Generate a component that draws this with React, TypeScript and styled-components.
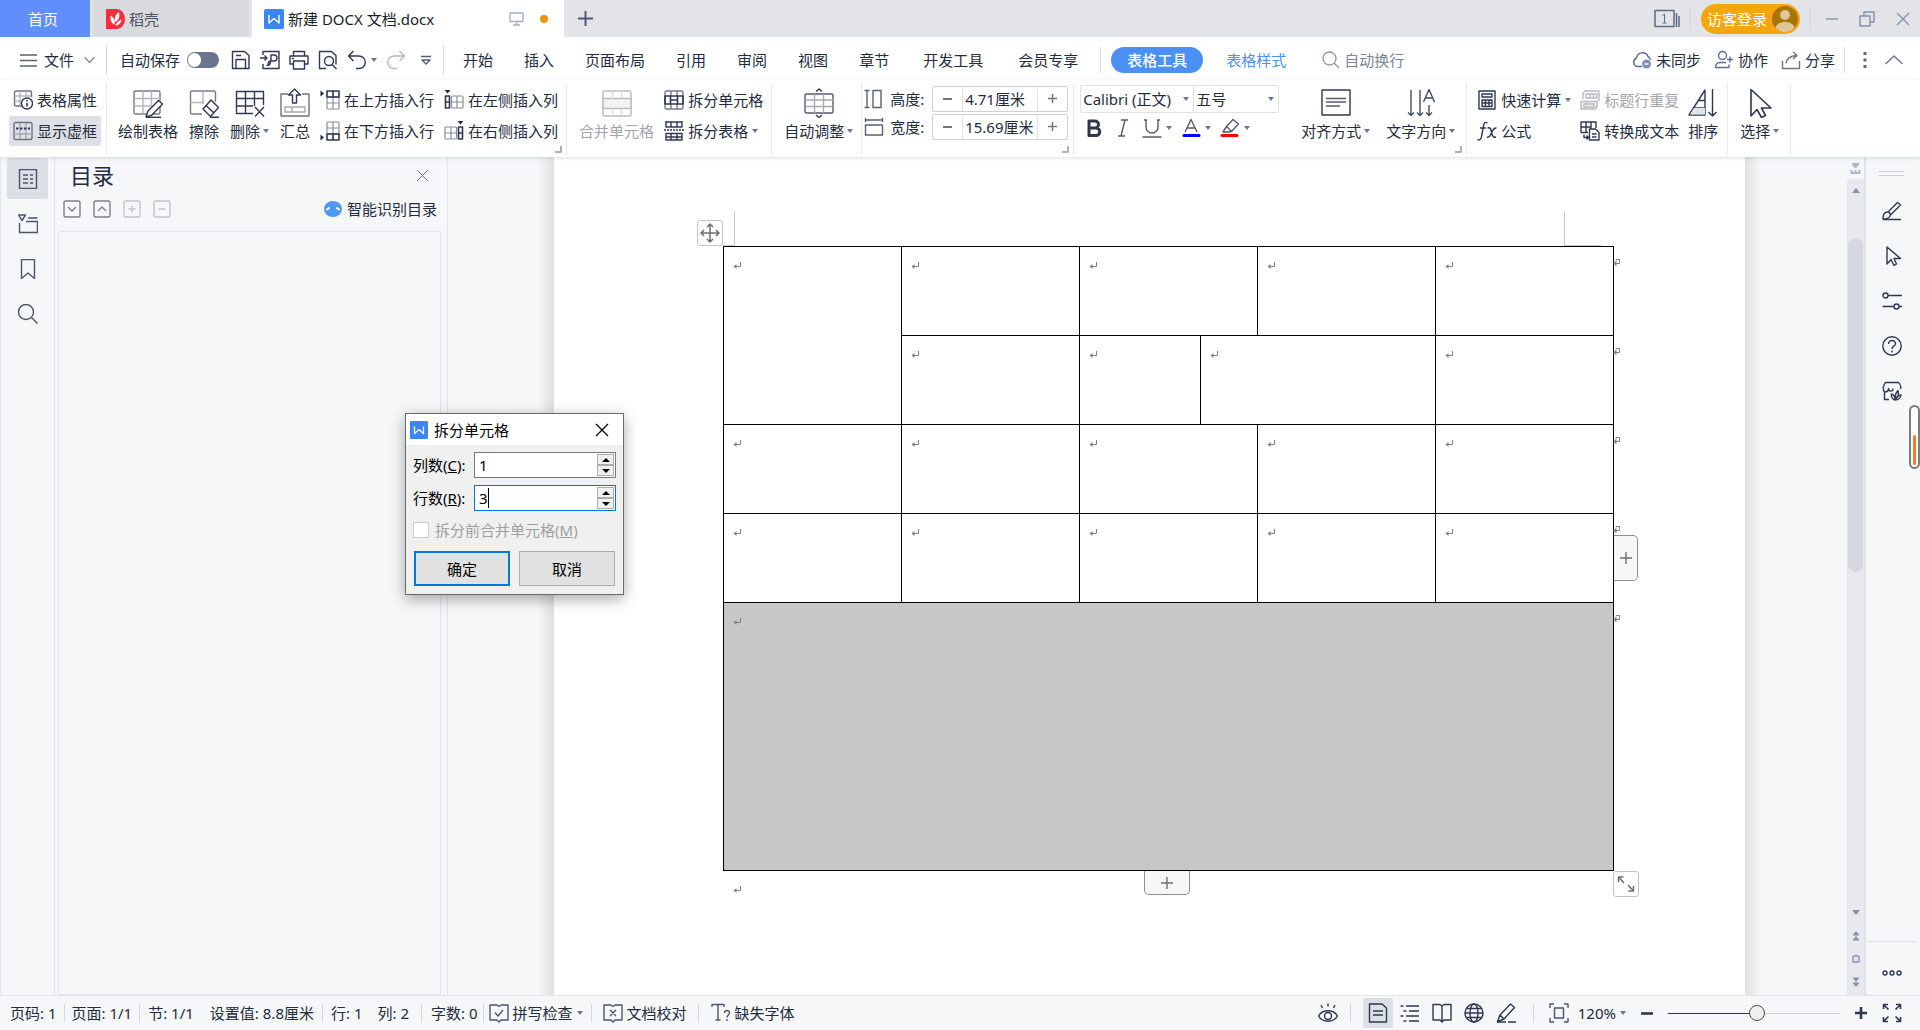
import React from "react";
import styled, { createGlobalStyle, css } from "styled-components";

const INK = "#242b3d";
const LINE = "#2f3850";
const MUTED = "#6b7590";
const PALE = "#b9bbbf";

const Global = createGlobalStyle`
  *, *::before, *::after { box-sizing: border-box; }
  body {
    margin: 0;
    font-family: "Noto Sans", "Noto Sans CJK SC", sans-serif;
    font-size: 15px;
    line-height: 20px;
    color: ${INK};
  }
  button, input, select {
    font: inherit;
    color: inherit;
    margin: 0;
    padding: 0;
    border: 0;
    background: none;
  }
  button { display: flex; align-items: center; white-space: nowrap; cursor: pointer; }
`;

/* ---------- drawing helpers ---------- */

const Svg = styled.svg`
  display: block;
  flex: none;
  fill: none;
  stroke-linejoin: round;
`;

type IconProps = { w?: number; h?: number; c?: string; sw?: number; children?: React.ReactNode };

const Icon = ({ w = 20, h = 20, c = LINE, sw = 1.4, children }: IconProps) => (
  <Svg width={w} height={h} viewBox={`0 0 ${w} ${h}`} stroke={c} strokeWidth={sw} aria-hidden="true">
    {children}
  </Svg>
);

const Caret = () => (
  <Icon w={6} h={4}>
    <path d="M0 0h6L3 4z" fill={MUTED} stroke="none" />
  </Icon>
);

const Plus = ({ size = 12, c = LINE, sw = 2 }: { size?: number; c?: string; sw?: number }) => (
  <Icon w={size} h={size} c={c} sw={sw}>
    <path d={`M${size / 2} 0v${size}M0 ${size / 2}h${size}`} />
  </Icon>
);

const ParaMark = () => (
  <Icon w={8} h={8} c="#808080" sw={1}>
    <path d="M7.5 0V4.500H2" />
    <path d="M0.500 4.500 3.500 2v5z" fill="#808080" stroke="none" />
  </Icon>
);

const RowEndMark = () => (
  <Icon w={7} h={8} c="#808080" sw={1}>
    <path d="M3 1.500V0.500H6.500V4.500H2M3 2v5" />
    <path d="M0 4.500 3 2.500v4z" fill="#808080" stroke="none" />
  </Icon>
);

const CrossX = ({ size = 14, c = MUTED, sw = 1.2 }: { size?: number; c?: string; sw?: number }) => (
  <Icon w={size} h={size} c={c} sw={sw}>
    <path d={`M1 1 ${size - 1} ${size - 1}M${size - 1} 1 1 ${size - 1}`} />
  </Icon>
);

/* ---------- shell ---------- */

const Shell = styled.div`
  height: 100vh;
  display: grid;
  grid-template-rows: auto auto auto minmax(0, 1fr) auto;
  overflow: hidden;
  background: #f5f7f9;
`;

/* ---------- title bar ---------- */

const TitleBar = styled.header`
  display: flex;
  height: 37px;
  background: #e2e4e8;
`;

const HomeTab = styled.button`
  width: 90px;
  justify-content: center;
  padding-right: 4px;
  color: #fff;
  background: #608efa;
`;

const DocTab = styled.button<{ $active?: boolean; $w: number }>`
  width: ${(p) => p.$w}px;
  margin-left: 3px;
  padding: 0 16px 0 ${(p) => (p.$active ? 12 : 13)}px;
  gap: 4px;
  color: ${(p) => (p.$active ? "#1a1e28" : "#4b5364")};
  background: ${(p) => (p.$active ? "#fff" : "#d9dadd")};
`;

const TabFlags = styled.span`
  display: flex;
  align-items: center;
  gap: 16px;
  margin-left: auto;
`;

const Dot = styled.span`
  width: 8px;
  height: 8px;
  border-radius: 50%;
  background: #e8960c;
`;

const NewTab = styled.button`
  padding: 0 14px;
`;

const WindowTools = styled.div`
  display: flex;
  align-items: center;
  gap: 10px;
  margin-left: auto;
  padding-right: 10px;
`;

const WindowButtons = styled.div`
  display: flex;
  align-items: center;
  gap: 21px;
  padding-left: 5px;
`;

const Rule = styled.span<{ $h: number }>`
  flex: none;
  width: 1px;
  height: ${(p) => p.$h}px;
  background: #d5d7dc;
`;

const Login = styled.button`
  height: 30px;
  padding: 0 2px 0 6px;
  gap: 5px;
  border-radius: 15px;
  color: #fff;
  background: #f5a60d;
`;

/* ---------- menu row ---------- */

const MenuBar = styled.nav`
  display: flex;
  align-items: center;
  height: 43px;
  padding-top: 3px;
  background: #fff;
`;

const FileButton = styled.button`
  padding: 0 11px 0 20px;
  gap: 7px;
  svg:last-child { margin-left: 3px; }
`;

const QuickBar = styled.div`
  display: flex;
  align-items: center;
  gap: 9px;
  padding: 0 12px 0 13px;
`;

const AutoSave = styled.label`
  display: flex;
  align-items: center;
  gap: 7px;
  padding-right: 3px;
`;

const Toggle = styled.input`
  appearance: none;
  width: 32px;
  height: 16px;
  border-radius: 8px;
  background: ${MUTED};
  &::before {
    content: "";
    display: block;
    width: 13px;
    height: 14px;
    margin: 1px;
    border-radius: 7px;
    background: #fff;
  }
`;

const CaretButton = styled.button`
  gap: 4px;
`;

const MoreQuick = styled.button`
  padding-left: 6px;
`;

const TabList = styled.div<{ $gap: number }>`
  display: flex;
  gap: ${(p) => p.$gap}px;
  padding-left: 4px;
`;

const MenuTab = styled.button`
  padding: 0 15px;
`;

const ContextTabs = styled.div`
  display: flex;
  align-items: center;
  gap: 23px;
  margin: 0 36px 0 7px;
  padding-left: 10px;
  border-left: 1px solid #d5d7dc;
`;

const ActivePill = styled.button`
  height: 26px;
  padding: 0 16px;
  border-radius: 13px;
  font-weight: 500;
  color: #fff;
  background: #4a90f5;
`;

const StyleTab = styled.button`
  color: #4a90f5;
`;

const SearchBox = styled.label`
  display: flex;
  align-items: center;
  gap: 4px;
`;

const SearchInput = styled.input`
  width: 90px;
  outline: 0;
  &::placeholder { color: #7b8496; opacity: 1; }
`;

const MenuRight = styled.div`
  display: flex;
  align-items: center;
  gap: 9px;
  margin-left: auto;
  padding-right: 17px;
`;

const ShareTools = styled.div`
  display: flex;
  align-items: center;
  gap: 13px;
`;

const MenuEnd = styled.div`
  display: flex;
  align-items: center;
  gap: 18px;
`;

/* ---------- ribbon ---------- */

const Ribbon = styled.div`
  position: relative;
  z-index: 2;
  display: flex;
  height: 77px;
  background: #fff;
  box-shadow: 0 1px 4px rgba(40, 50, 70, 0.16);
`;

const Group = styled.section<{ $pad: string; $gap?: number }>`
  position: relative;
  display: flex;
  gap: ${(p) => p.$gap ?? 10}px;
  padding: ${(p) => p.$pad};
  &::after {
    content: "";
    position: absolute;
    right: 0;
    top: 3px;
    width: 1px;
    height: 72px;
    background: #e9eaed;
  }
`;

const BigRow = styled.div<{ $gap: number }>`
  display: flex;
  gap: ${(p) => p.$gap}px;
`;

const BigBtn = styled.button`
  flex-direction: column;
  align-items: center;
  gap: 3px;
  height: 62px;
  padding-top: 8px;
  justify-content: flex-start;
  &:disabled { color: #a3a5aa; }
`;

const BigLabel = styled.span`
  display: flex;
  align-items: center;
  gap: 3px;
`;

const Stack = styled.div`
  display: flex;
  flex-direction: column;
  gap: 1px;
  padding-top: 5px;
`;

const SmallBtn = styled.button<{ $on?: boolean; $pad?: boolean }>`
  height: 30px;
  gap: 4px;
  border-radius: 2px;
  &:disabled { color: #a3a5aa; }
  ${(p) => p.$pad && css`padding: 0 4px;`}
  ${(p) => p.$on && css`background: #dde1e6;`}
`;

const Launcher = styled.button`
  position: absolute;
  right: 5px;
  bottom: 4px;
`;

const SizeStack = styled.div`
  display: flex;
  flex-direction: column;
  gap: 1px;
  padding-top: 5px;
`;

const SizeRow = styled.div`
  display: flex;
  align-items: center;
  height: 27px;
`;

const SizeLabel = styled.label`
  display: flex;
  align-items: center;
  gap: 6px;
  width: 68px;
`;

const Stepper = styled.div`
  display: flex;
  height: 26px;
  border: 1px solid #cdd0d6;
  border-radius: 2px;
`;

const StepBtn = styled.button`
  width: 29px;
  justify-content: center;
`;

const SizeInput = styled.input`
  width: 76px;
  padding: 0 2px;
  border: solid #dfe1e5;
  border-width: 0 1px;
`;

const FontStack = styled.div`
  display: flex;
  flex-direction: column;
  gap: 5px;
  padding: 5px 12px 0 0;
`;

const FontRow = styled.div`
  display: flex;
  height: 28px;
  border: 1px solid #dfe1e5;
  border-radius: 2px;
`;

const SelectWrap = styled.label<{ $w: number; $line?: boolean }>`
  display: flex;
  align-items: center;
  width: ${(p) => p.$w}px;
  padding: 0 4px 0 2px;
  ${(p) => p.$line && css`border-left: 1px solid #dfe1e5;`}
`;

const PlainSelect = styled.select`
  flex: 1;
  min-width: 0;
  appearance: none;
  outline: 0;
`;

const FormatRow = styled.div`
  display: flex;
  gap: 9px;
  padding-left: 4px;
`;

/* ---------- body ---------- */

const Body = styled.main`
  position: relative;
  display: flex;
  min-height: 0;
`;

const LeftRail = styled.div`
  display: flex;
  flex-direction: column;
  gap: 4px;
  width: 55px;
  padding: 1px 0 0 6px;
  border: solid #e4e6ec;
  border-width: 0 1px;
`;

const RailBtn = styled.button<{ $on?: boolean }>`
  justify-content: center;
  width: 41px;
  height: 41px;
  border-radius: 2px;
  ${(p) => p.$on && css`background: #dbdfe6;`}
`;

const Panel = styled.aside`
  display: flex;
  flex-direction: column;
  width: 393px;
  padding: 8px 6px 0 3px;
  border-right: 1px solid #e2e4ea;
`;

const PanelHead = styled.div`
  display: flex;
  justify-content: space-between;
  padding: 0 12px;
`;

const PanelTitle = styled.h2`
  margin: 0;
  font-size: 22px;
  line-height: 20px;
  font-weight: 400;
`;

const PanelTools = styled.div`
  display: flex;
  align-items: center;
  gap: 12px;
  padding: 14px 4px 12px 5px;
`;

const SmartBtn = styled.button`
  gap: 5px;
  margin-left: auto;
`;

const Outline = styled.div`
  flex: 1;
  border: 1px solid #e2e4ea;
  border-radius: 2px;
`;

const DocArea = styled.div`
  flex: 1;
  display: flex;
  justify-content: center;
  min-width: 0;
  padding-left: 4px;
  overflow: hidden;
`;

const Page = styled.article`
  position: relative;
  flex: none;
  width: 1191px;
  padding: 89px 0 0 169px;
  background: #fff;
  &::before, &::after {
    content: "";
    position: absolute;
    top: 0;
    bottom: 0;
    width: 16px;
  }
  &::before { right: 100%; background: linear-gradient(to left, #dfe0e2, #f5f7f9); }
  &::after { left: 100%; background: linear-gradient(to right, #dfe0e2, #f5f7f9); }
`;

const TableWrap = styled.div`
  position: relative;
  width: 890px;
`;

const Grid = styled.table`
  width: 891px;
  table-layout: fixed;
  border-collapse: separate;
  border-spacing: 0;
  border: solid #000;
  border-width: 1px 0 0 1px;
`;

const Cell = styled.td<{ $selected?: boolean }>`
  position: relative;
  padding: 15px 9px 0;
  vertical-align: top;
  border: solid #000;
  border-width: 0 1px 1px 0;
  ${(p) => p.$selected && css`background: #c7c7c7;`}
`;

const Row = styled.tr<{ $h: number }>`
  height: ${(p) => p.$h}px;
`;

const RowEnd = styled.span`
  position: absolute;
  top: 12px;
  left: 100%;
`;

const LastPara = styled.p`
  margin: 0;
  padding: 15px 10px;
`;

const Corner = styled.span<{ $side: "left" | "right" }>`
  position: absolute;
  bottom: 100%;
  height: 35px;
  border: solid #c9c9c9;
  ${(p) =>
    p.$side === "left"
      ? css`left: 0; width: 12px; border-width: 0 1px 1px 0;`
      : css`right: 12px; width: 37px; border-width: 0 0 1px 1px;`}
`;

const handle = css`
  position: absolute;
  justify-content: center;
  border: 1px solid #c4c4c4;
  border-radius: 3px;
  background: #fff;
`;

const MoveHandle = styled.button`
  ${handle}
  right: 100%;
  bottom: 100%;
  width: 26px;
  height: 26px;
`;

const ResizeHandle = styled.button`
  ${handle}
  left: 100%;
  top: 100%;
  width: 26px;
  height: 26px;
`;

const AddColumn = styled.button`
  ${handle}
  left: 100%;
  top: 289px;
  width: 25px;
  height: 46px;
  border-color: #8f8f8f;
  border-left: 1px solid #000;
  border-radius: 0 5px 5px 0;
  background: #f7f7f7;
`;

const AddRow = styled.button`
  ${handle}
  left: 50%;
  top: 100%;
  width: 46px;
  height: 24px;
  margin-left: -24px;
  border-color: #8f8f8f;
  border-top: 0;
  border-radius: 0 0 5px 5px;
  background: #f7f7f7;
`;

const ScrollBar = styled.div`
  display: flex;
  flex-direction: column;
  width: 19px;
  padding-bottom: 2px;
  border-right: 2px solid #e0e2ea;
  background: #e8e9ee;
`;

const ScrollBtn = styled.button<{ $light?: boolean }>`
  flex: none;
  justify-content: center;
  height: ${(p) => (p.$light ? 22 : 23)}px;
  ${(p) => p.$light && css`background: #f5f7f9;`}
`;

const Track = styled.div`
  flex: 1;
  display: flex;
  flex-direction: column;
  align-items: center;
  &::before { content: ""; flex: 36; }
  &::after { content: ""; flex: 330; }
`;

const Thumb = styled.div`
  flex: 335;
  width: 15px;
  border-radius: 8px;
  background: #d5d8e1;
`;

const RightRail = styled.div`
  position: relative;
  display: flex;
  flex-direction: column;
  align-items: center;
  width: 54px;
  padding: 14px 3px 0 0;
`;

const Grip = styled.span`
  width: 25px;
  height: 5px;
  margin-bottom: 12px;
  border: solid #cfd1d6;
  border-width: 1px 0;
`;

const SideBtn = styled.button`
  justify-content: center;
  width: 41px;
  height: 45px;
`;

const SideFoot = styled.div`
  display: flex;
  justify-content: center;
  width: 49px;
  height: 54px;
  margin-top: auto;
  padding-top: 8px;
  border-top: 1px solid #dfe1e6;
`;

const Gauge = styled.span`
  position: absolute;
  right: 0;
  top: 248px;
  display: flex;
  align-items: flex-end;
  width: 11px;
  height: 64px;
  padding: 2px;
  border: 2px solid #7d7d7d;
  border-radius: 6px;
  background: #fff;
  &::before {
    content: "";
    flex: 1;
    height: 54%;
    border-radius: 2px;
    background: #fb7a22;
  }
`;

/* ---------- dialog ---------- */

const Dialog = styled.form`
  position: absolute;
  z-index: 3;
  left: 405px;
  top: 256px;
  width: 219px;
  border: 1px solid #6a6a6a;
  color: #000;
  background: #f0f0f0;
  box-shadow: 0 4px 14px rgba(0, 0, 0, 0.34);
`;

const DialogTitle = styled.div`
  display: flex;
  align-items: center;
  gap: 6px;
  height: 31px;
  padding: 0 14px 0 4px;
  background: #fff;
  button { margin-left: auto; }
`;

const DialogBody = styled.div`
  display: flex;
  flex-direction: column;
  gap: 7px;
  padding: 7px 7px 8px;
`;

const Field = styled.div`
  display: grid;
  grid-template-columns: 61px minmax(0, 1fr);
  align-items: center;
`;

const NumBox = styled.div<{ $focus?: boolean }>`
  position: relative;
  display: flex;
  height: 26px;
  padding: 1px;
  border: 1px solid ${(p) => (p.$focus ? "#0078d7" : "#7a7a7a")};
  background: #fff;
`;

const NumInput = styled.input`
  flex: 1;
  min-width: 0;
  padding-left: 3px;
  outline: 0;
  caret-color: transparent;
`;

const Cursor = styled.span`
  position: absolute;
  left: 13px;
  top: 2px;
  width: 1px;
  height: 20px;
  background: #000;
`;

const Spin = styled.div`
  display: flex;
  flex-direction: column;
  width: 17px;
  button {
    flex: 1;
    justify-content: center;
    border: 1px solid #adadad;
    background: #f0f0f0;
  }
`;

const MergeCheck = styled.label`
  display: flex;
  align-items: center;
  gap: 6px;
  height: 24px;
  color: #a0a0a0;
`;

const CheckBox = styled.input`
  appearance: none;
  width: 16px;
  height: 16px;
  border: 1px solid #ccc;
  background: #fff;
`;

const DialogButtons = styled.div`
  display: grid;
  grid-template-columns: 1fr 1fr;
  gap: 9px;
  padding: 2px 1px 0;
`;

const DialogBtn = styled.button<{ $primary?: boolean }>`
  justify-content: center;
  height: 35px;
  border: ${(p) => (p.$primary ? "2px solid #0078d7" : "1px solid #adadad")};
  background: #e1e1e1;
`;

/* ---------- status bar ---------- */

const StatusBar = styled.footer`
  display: flex;
  align-items: center;
  height: 35px;
  padding: 0 18px 0 3px;
  border-top: 1px solid #e2e4e8;
  background: #f5f7f9;
`;

const StatusItem = styled.button<{ $pad?: string }>`
  gap: 4px;
  padding: ${(p) => p.$pad ?? "0 8px"};
`;

const StatusRight = styled.div`
  display: flex;
  align-items: center;
  gap: 12px;
  margin-left: auto;
`;

const ViewButtons = styled.div`
  display: flex;
  gap: 2px;
`;

const ViewBtn = styled.button<{ $on?: boolean }>`
  justify-content: center;
  width: 30px;
  height: 30px;
  border-radius: 2px;
  ${(p) => p.$on && css`background: #dbdfe6;`}
`;

const ZoomTools = styled.div`
  display: flex;
  align-items: center;
  gap: 15px;
  padding-left: 3px;
`;

const ZoomFit = styled.div`
  display: flex;
  gap: 9px;
`;

const ZoomSlider = styled.input`
  appearance: none;
  width: 172px;
  height: 16px;
  &::-webkit-slider-runnable-track {
    height: 16px;
    background:
      linear-gradient(to right, ${LINE} 52%, #d3d5da 52%) center / 100% 1px no-repeat;
  }
  &::-webkit-slider-thumb {
    appearance: none;
    width: 16px;
    height: 16px;
    border: 1px solid #4b4b4b;
    border-radius: 50%;
    background: #efefef;
  }
`;

/* ---------- table icons ---------- */

const WLogo = ({ size = 20 }: { size?: number }) => (
  <Svg width={size} height={size} viewBox="0 0 20 20" aria-hidden="true">
    <rect width="20" height="20" rx="1.500" fill="#3b86f3" />
    <path d="M5 6v8l5-4.500 5 4.500v-8" stroke="#fff" strokeWidth="1.400" />
  </Svg>
);

const InsertRowIcon = ({ down }: { down?: boolean }) => (
  <Icon w={20} h={20} sw={1.2}>
    <g transform={down ? "translate(0 20) scale(1 -1)" : undefined}>
      <path d="M0.500 0.500v6l3.500-3z" fill={INK} stroke="none" />
      <rect x="7" y="7" width="12" height="12" rx="1" stroke="#8a8e99" />
      <path d="M13 7v12M7 13h12" stroke="#8a8e99" />
      <path d="M7 1h12v6H7zM13 1v6" strokeWidth="1.600" />
    </g>
  </Icon>
);

const InsertColIcon = ({ right }: { right?: boolean }) => (
  <Icon w={20} h={20} sw={1.2}>
    <g transform={right ? "translate(20 0) scale(-1 1)" : undefined}>
      <path d="M0.500 0h6L3.500 3.500z" fill={INK} stroke="none" />
      <rect x="7.500" y="6" width="11.500" height="12" rx="1" stroke="#8a8e99" />
      <path d="M13 6v12M7 12h12" stroke="#8a8e99" />
      <path d="M1.500 6h4v12h-4zM1.500 12h4" strokeWidth="1.600" />
    </g>
  </Icon>
);

const GridLarge = () => (
  <>
    <rect x="1" y="3" width="26" height="23" rx="1.500" stroke="#777c88" />
    <path d="M10 3v23M18.500 3v23M1 10.500h26M1 18h26" stroke="#b3b6bd" />
  </>
);

const columns = [178, 178, 121, 57, 178, 178];

export default function App() {
  return (
    <Shell>
      <Global />
      <TitleBar>
        <HomeTab>首页</HomeTab>
        <DocTab $w={156}>
          <Icon w={19} h={20}>
            <path d="M0 0h11a8 10 0 0 1 0 20H0z" fill="#fb2d3c" stroke="none" />
            <path d="M8.500 16C4 13 4 9 5 6.500 8 9 9.500 12 8.500 16zM9 13C8 8 10 5 13 3c1 5 0 8-4 10zM9.500 16.500c1-3 3-5 6-6-.500 3.500-2.500 6-6 6z" fill="#fff" stroke="none" />
          </Icon>
          稻壳
        </DocTab>
        <DocTab $w={312} $active>
          <WLogo />
          新建 DOCX 文档.docx
          <TabFlags>
            <Icon w={15} h={14} c="#a3adc3" sw={1.3}>
              <path d="M1 1h13v8.500H1zM7.500 9.500V13M4 13h7" />
            </Icon>
            <Dot />
          </TabFlags>
        </DocTab>
        <NewTab aria-label="新建标签">
          <Plus size={15} c="#4c5876" />
        </NewTab>
        <WindowTools>
          <Icon w={26} h={20} c="#5d6a88" sw={1.5}>
            <path d="M1 1.500h19v16H1zM22.500 4v14M25 7v11" />
            <path d="M8.500 6.500 10.500 5v9M8.500 14h4" strokeWidth="1" />
          </Icon>
          <Rule $h={25} />
          <Login>
            访客登录
            <Icon w={26} h={26}>
              <circle cx="13" cy="13" r="13" fill="#a97407" stroke="none" />
              <circle cx="13" cy="9" r="5" fill="#ddc698" stroke="none" />
              <path d="M3.500 22c1-8 18-8 19 0a13 13 0 0 1-19 0z" fill="#ddc698" stroke="none" />
            </Icon>
          </Login>
          <Rule $h={25} />
          <WindowButtons>
            <button aria-label="最小化">
              <Icon w={12} h={2} c="#8290ac"><path d="M0 1h12" /></Icon>
            </button>
            <button aria-label="还原">
              <Icon w={16} h={16} c="#8290ac">
                <path d="M1 5h10v10H1zM5 5V1h10v10h-4" />
              </Icon>
            </button>
            <button aria-label="关闭">
              <CrossX c="#8290ac" />
            </button>
          </WindowButtons>
        </WindowTools>
      </TitleBar>

      <MenuBar>
        <FileButton>
          <Icon w={17} h={13} c="#5b6270"><path d="M0 1h17M0 6.500h17M0 12h17" /></Icon>
          文件
          <Icon w={11} h={8} c="#8a8f9a"><path d="M0.500 1 5.500 6.500 10.500 1" /></Icon>
        </FileButton>
        <Rule $h={30} />
        <QuickBar>
          <AutoSave>
            自动保存
            <Toggle type="checkbox" role="switch" />
          </AutoSave>
          <button aria-label="保存">
            <Icon>
              <path d="M1.500 1.500h12l4.500 4V18.500H1.500zM5 18V9.500h9.500V18M5 5.500h5" />
            </Icon>
          </button>
          <button aria-label="输出">
            <Icon>
              <path d="M3 5V1.500h16v17H3V14M0 8h7M4.500 5.500 7 8 4.500 10.500" />
              <path d="M8 15c0-3 1-4 3-4h3a3 3 0 0 0 0-6h-3v6M6.500 15.500c2 0 4-1 4-4" />
            </Icon>
          </button>
          <button aria-label="打印">
            <Icon>
              <path d="M4.500 6V1.500h11V6M4.500 14H1V6h18v8h-3.500M4.500 11h11v8h-11zM3 8.500h2" />
            </Icon>
          </button>
          <button aria-label="打印预览">
            <Icon>
              <path d="M8 18.500H1.500v-17h12l4.500 4v9" />
              <circle cx="11" cy="11" r="4.500" />
              <path d="M14 14.500 18.500 19" />
            </Icon>
          </button>
          <CaretButton aria-label="撤销">
            <Icon>
              <path d="M6.500 1 1.500 6l5 5M1.500 6H12a6 6 0 0 1 0 12.500H9" />
            </Icon>
            <Caret />
          </CaretButton>
          <button aria-label="恢复">
            <Icon c="#b4b7bd">
              <path d="M13.500 1l5 5-5 5M18.500 6H8a6 6 0 0 0 0 12.500h3" />
            </Icon>
          </button>
          <MoreQuick aria-label="更多">
            <Icon w={10} h={11} c="#555c6c"><path d="M0 1.500h10M1 5h8L5 9z" /></Icon>
          </MoreQuick>
        </QuickBar>
        <Rule $h={30} />
        <TabList $gap={1}>
          {["开始", "插入", "页面布局", "引用", "审阅", "视图", "章节"].map((t) => (
            <MenuTab key={t}>{t}</MenuTab>
          ))}
        </TabList>
        <TabList $gap={5}>
          {["开发工具", "会员专享"].map((t) => (
            <MenuTab key={t}>{t}</MenuTab>
          ))}
        </TabList>
        <ContextTabs>
          <ActivePill>表格工具</ActivePill>
          <StyleTab>表格样式</StyleTab>
        </ContextTabs>
        <SearchBox>
          <Icon w={18} h={18} c="#8e97ab" sw={1.3}>
            <circle cx="7.500" cy="7.500" r="6.500" />
            <path d="M12 12l5 5" />
          </Icon>
          <SearchInput type="text" placeholder="自动换行" />
        </SearchBox>
        <MenuRight>
          <ShareTools>
            <CaretButton>
              <Icon c="#5f6d8c">
                <path d="M10 16.500H5A4.500 4.500 0 0 1 4.500 8a6 6 0 0 1 11.500-1.500A4.500 4.500 0 0 1 18.500 10" />
                <circle cx="14.500" cy="14" r="4.500" fill="#8391b3" stroke="none" />
                <path d="M12.500 14h4" stroke="#fff" />
              </Icon>
              未同步
            </CaretButton>
            <CaretButton>
              <Icon c="#5f6d8c">
                <circle cx="8.500" cy="5.500" r="4" />
                <path d="M12 12.500H6a4.500 4.500 0 0 0-4.500 5H15v-3M13 9.500h6M16 6.500v6" />
              </Icon>
              协作
            </CaretButton>
            <CaretButton>
              <Icon c="#6d7484">
                <path d="M1.500 11v7.500h17V11M5 13.500C5.500 9 8 6 15.500 5.500M12 2l4 3.500L12 9" />
              </Icon>
              分享
            </CaretButton>
          </ShareTools>
          <MenuEnd>
            <Rule $h={26} />
            <button aria-label="更多选项">
              <Icon w={4} h={16}>
                <path d="M2 0v3M2 6.500v3M2 13v3" strokeWidth="3" stroke="#5f6675" />
              </Icon>
            </button>
            <button aria-label="折叠功能区">
              <Icon w={18} h={10} c="#6d7484"><path d="M0.500 9 9 1l8.500 8" /></Icon>
            </button>
          </MenuEnd>
        </MenuRight>
      </MenuBar>

      <Ribbon>
        <Group $pad="0 6px 0 9px">
          <Stack>
            <SmallBtn $pad>
              <Icon>
                <path d="M9 16H3a1.500 1.500 0 0 1-1.500-1.500v-12A1.500 1.500 0 0 1 3 1h14a1.500 1.500 0 0 1 1.500 1.500V7" stroke="#6d727e" />
                <path d="M7 1v15M13 1v5M1.500 6H18M1.500 11H8" stroke="#b3b6bd" />
                <circle cx="14" cy="13.500" r="5.500" />
                <path d="M14 13v3.500M14 10v1.500" strokeWidth="1.600" />
              </Icon>
              表格属性
            </SmallBtn>
            <SmallBtn $pad $on>
              <Icon>
                <rect x="1" y="1.500" width="18" height="17" rx="1.500" stroke="#6d727e" />
                <path d="M7 2v16M13 2v16M1 13h18" stroke="#a5a9b1" />
                <path d="M3 7.500h14" strokeDasharray="2.500 1.500" strokeWidth="1.800" />
              </Icon>
              显示虚框
            </SmallBtn>
          </Stack>
        </Group>

        <Group $pad="0 9px 0 11px">
          <BigRow $gap={11}>
            <BigBtn>
              <Icon w={30} h={30}>
                <GridLarge />
                <path d="M13 29l2-6L25.500 12.500l4 3.500L19 27z" fill="#fff" />
                <path d="M13 29.300h15" />
              </Icon>
              <BigLabel>绘制表格</BigLabel>
            </BigBtn>
            <BigBtn>
              <Icon w={30} h={30}>
                <path d="M13 26H3a1.500 1.500 0 0 1-1.500-1.500v-20A1.500 1.500 0 0 1 3 3h22a1.500 1.500 0 0 1 1.500 1.500V14" stroke="#777c88" />
                <path d="M14 3v13M1.500 14.500H15" stroke="#b3b6bd" />
                <path d="M22 12 29.500 19.500 21.500 28.500 14 21z" fill="#fff" />
                <path d="M17 17.500l8 7.500M21 29.300h9" />
              </Icon>
              <BigLabel>擦除</BigLabel>
            </BigBtn>
            <BigBtn>
              <Icon w={30} h={30}>
                <path d="M18 25.500H1.500v-22h27V17M10.500 3.500v22M19.500 3.500V18M1.500 10.500h27M1.500 18H18" />
                <path d="M20 19l9 9.500M29 19l-9 9.500" />
              </Icon>
              <BigLabel>删除<Caret /></BigLabel>
            </BigBtn>
            <BigBtn>
              <Icon w={30} h={30}>
                <path d="M8 6H1v22h28V6h-7" stroke="#6d727e" />
                <path d="M5 19h20v5H5zM12 19v5" stroke="#a5a9b1" />
                <path d="M12.500 15V7h-4l6-6 6 6h-4v8z" />
              </Icon>
              <BigLabel>汇总</BigLabel>
            </BigBtn>
          </BigRow>
          <Stack>
            <SmallBtn><InsertRowIcon />在上方插入行</SmallBtn>
            <SmallBtn><InsertRowIcon down />在下方插入行</SmallBtn>
          </Stack>
          <Stack>
            <SmallBtn><InsertColIcon />在左侧插入列</SmallBtn>
            <SmallBtn><InsertColIcon right />在右侧插入列</SmallBtn>
          </Stack>
          <Launcher aria-label="行和列选项">
            <Icon w={7} h={7} c="#a7b0c4" sw={2}><path d="M6 0v6H0" /></Icon>
          </Launcher>
        </Group>

        <Group $pad="0 9px 0 12px">
          <BigBtn disabled>
            <Icon w={30} h={30} c={PALE}>
              <rect x="1" y="3" width="28" height="25" rx="1.500" />
              <path d="M1 10.500h28v10H1z" fill="#f3f3f4" />
              <path d="M10.500 3v7.500M19.500 3v7.500M10.500 20.500V28M19.500 20.500V28" stroke="#dcdde0" />
            </Icon>
            <BigLabel>合并单元格</BigLabel>
          </BigBtn>
          <Stack>
            <SmallBtn>
              <Icon>
                <rect x="1" y="1" width="18" height="18" rx="1.500" stroke="#777c88" />
                <path d="M7 1v5M13 1v5M7 14v5M13 14v5" stroke="#777c88" />
                <path d="M1 6h18v8H1zM6.500 6v8M13.500 6v8M6.500 10h7" strokeWidth="1.600" />
              </Icon>
              拆分单元格
            </SmallBtn>
            <SmallBtn>
              <Icon>
                <path d="M2 0v6h16V0M2 1h16M7 1v5M13 1v5" />
                <path d="M0 9h20" strokeDasharray="2 1" />
                <path d="M2 12.500h16v6.500H2zM7 12.500V19M13 12.500V19M2 16h16" />
              </Icon>
              拆分表格<Caret />
            </SmallBtn>
          </Stack>
        </Group>

        <Group $pad="0 9px 0 12px">
          <BigBtn>
            <Icon w={30} h={30}>
              <rect x="1" y="6" width="28" height="19" rx="1.500" stroke="#555b6b" />
              <path d="M10.500 6v19M19.500 6v19M1 12h28M1 18.500h28" stroke="#a5a9b1" />
              <path d="M12 3.500 15 1l3 2.500M12 27l3 2.500 3-2.500" />
            </Icon>
            <BigLabel>自动调整<Caret /></BigLabel>
          </BigBtn>
        </Group>

        <Group $pad="0 6px 0 2px">
          <SizeStack>
            <SizeRow>
              <SizeLabel htmlFor="row-height">
                <Icon c="#5a6170"><path d="M0.500 1.500h5M3 1.500v17M0.500 18.500h5M9 1.500h8v17H9z" /></Icon>
                高度:
              </SizeLabel>
              <Stepper>
                <StepBtn aria-label="减小高度"><Icon w={9} h={2} c="#70757f" sw={2}><path d="M0 1h9" /></Icon></StepBtn>
                <SizeInput id="row-height" type="text" defaultValue="4.71厘米" />
                <StepBtn aria-label="增大高度"><Plus size={9} c="#70757f" sw={1.5} /></StepBtn>
              </Stepper>
            </SizeRow>
            <SizeRow>
              <SizeLabel htmlFor="col-width">
                <Icon c="#5a6170"><path d="M1.500 1v4M1.500 3h17M18.500 1v4M1.500 8h17v10h-17z" /></Icon>
                宽度:
              </SizeLabel>
              <Stepper>
                <StepBtn aria-label="减小宽度"><Icon w={9} h={2} c="#70757f" sw={2}><path d="M0 1h9" /></Icon></StepBtn>
                <SizeInput id="col-width" type="text" defaultValue="15.69厘米" />
                <StepBtn aria-label="增大宽度"><Plus size={9} c="#70757f" sw={1.5} /></StepBtn>
              </Stepper>
            </SizeRow>
          </SizeStack>
          <Launcher aria-label="单元格大小选项">
            <Icon w={7} h={7} c="#a7b0c4" sw={2}><path d="M6 0v6H0" /></Icon>
          </Launcher>
        </Group>

        <Group $pad="0 12px 0 6px">
          <FontStack>
            <FontRow>
              <SelectWrap $w={112}>
                <PlainSelect aria-label="字体" defaultValue="c">
                  <option value="c">Calibri (正文)</option>
                </PlainSelect>
                <Caret />
              </SelectWrap>
              <SelectWrap $w={85} $line>
                <PlainSelect aria-label="字号" defaultValue="5">
                  <option value="5">五号</option>
                </PlainSelect>
                <Caret />
              </SelectWrap>
            </FontRow>
            <FormatRow>
              <button aria-label="加粗">
                <Icon sw={3}><path d="M5 3h6a3.300 3.300 0 0 1 0 7H5zM5 10h7a3.500 3.500 0 0 1 0 7.500H5z" /></Icon>
              </button>
              <button aria-label="倾斜">
                <Icon c="#555b6b"><path d="M8 2h7M5 18h7M12 2 8 18" /></Icon>
              </button>
              <CaretButton aria-label="下划线">
                <Icon c="#555b6b"><path d="M2 2h3M15 2h3M4 2v7a6 6 0 0 0 12 0V2M0.500 19h19" /></Icon>
                <Caret />
              </CaretButton>
              <CaretButton aria-label="字体颜色">
                <Icon c="#555b6b">
                  <path d="M4 14 10 1.500 16 14M6 10h8" />
                  <path d="M3 17.500h15" stroke="#0000ff" strokeWidth="3" strokeLinecap="round" />
                </Icon>
                <Caret />
              </CaretButton>
              <CaretButton aria-label="突出显示">
                <Icon c="#555b6b">
                  <path d="M3 14l3.500-5.500L13 1.500l5.500 4.500-7 7.500L8 14zM6.500 8.500l5 5" />
                  <path d="M2 17.500h15" stroke="#ff0000" strokeWidth="3" strokeLinecap="round" />
                </Icon>
                <Caret />
              </CaretButton>
            </FormatRow>
          </FontStack>
          <BigRow $gap={16}>
            <BigBtn>
              <Icon w={30} h={30}>
                <path d="M1 2h28v25H1z" />
                <path d="M5 10.500h20M5 14h20M5 18h14" stroke="#555b6b" />
              </Icon>
              <BigLabel>对齐方式<Caret /></BigLabel>
            </BigBtn>
            <BigBtn>
              <Icon w={30} h={30} c="#454c5e">
                <path d="M5 2v25M2 24.500l3 3 3-3M14 2v25M11 24.500l3 3 3-3M23 17v10M20 24.500l3 3 3-3M17.500 14 23 1.500 28.500 14M19.500 10h7" />
              </Icon>
              <BigLabel>文字方向<Caret /></BigLabel>
            </BigBtn>
          </BigRow>
          <Launcher aria-label="对齐选项">
            <Icon w={7} h={7} c="#a7b0c4" sw={2}><path d="M6 0v6H0" /></Icon>
          </Launcher>
        </Group>

        <Group $pad="0 10px 0 10px" $gap={9}>
          <Stack>
            <SmallBtn>
              <Icon>
                <rect x="2" y="1" width="16" height="18" />
                <path d="M5 4h10v3H5zM5 10h10v6.500H5zM8.500 10v6.500M12 10v6.500M5 13h10" />
              </Icon>
              快速计算<Caret />
            </SmallBtn>
            <SmallBtn>
              <Icon>
                <path d="M10.500 2C8 0.500 7 2 6.500 5L4.500 15.500C4 18.500 2.500 19.500 0.500 18.500M3 7h6M10.500 7c3-1 3.500 1 4 4s1.500 6 4.500 5M19.500 7c-2.500-.500-4 2.500-5 5s-2.500 5-4.500 4" />
              </Icon>
              公式
            </SmallBtn>
          </Stack>
          <Stack>
            <SmallBtn disabled>
              <Icon c={PALE}>
                <path d="M3 9V3l2-2h14v9l-2 1.500" />
                <path d="M6 4h11v4H6zM10 4v4M13.500 4v4" />
                <path d="M1 11.500h16v5L15 19H1zM4 14h10v3H4z" fill="#f1f1f2" />
              </Icon>
              标题行重复
            </SmallBtn>
            <SmallBtn>
              <Icon>
                <path d="M8 11.500H1V1h15v6M6 1v10.500M11 1v7M1 6h10" />
                <path d="M9.500 8h6l3.500 3.500V19H9.500zM12 13h4.500M12 16h4.500M4 13.500v3h4M6.500 14.500 8.500 16.500 6.500 18.500" />
              </Icon>
              转换成文本
            </SmallBtn>
          </Stack>
          <BigBtn>
            <Icon w={30} h={30}>
              <path d="M1 27 17 2v25zM6.500 20H17M11 12.500h6" />
              <path d="M6 20h11v6.500H2z" fill="#e2e3e6" stroke="none" />
              <path d="M24.500 1v27M20.500 24l4 4 4-4" />
            </Icon>
            <BigLabel>排序</BigLabel>
          </BigBtn>
        </Group>

        <Group $pad="0 12px 0 12px">
          <BigBtn>
            <Icon w={30} h={30} sw={1.6}>
              <path d="M6 1.500V28l6-6.500 4.500 8 4-2-4-7.500H26z" />
            </Icon>
            <BigLabel>选择<Caret /></BigLabel>
          </BigBtn>
        </Group>
      </Ribbon>

      <Body>
        <LeftRail>
          <RailBtn $on aria-label="目录">
            <Icon c="#4b5670"><path d="M1.500 0.500h17v19h-17zM5 6h5M12 6h3M5 10h5M12 10h3M5 14h5M12 14h3" /></Icon>
          </RailBtn>
          <RailBtn aria-label="大纲">
            <Icon c="#4b5670"><path d="M0.500 1h7L4 6.500zM10 4h9.500M8 7.500h11.500V18.500H1.500V9" /></Icon>
          </RailBtn>
          <RailBtn aria-label="书签">
            <Icon c="#4b5670"><path d="M3.500 0.500h13v19L10 14l-6.500 5.500z" /></Icon>
          </RailBtn>
          <RailBtn aria-label="查找">
            <Icon c="#4b5670"><circle cx="8" cy="8" r="7.500" /><path d="M13.500 13.500l6 6" /></Icon>
          </RailBtn>
        </LeftRail>

        <Panel>
          <PanelHead>
            <PanelTitle>目录</PanelTitle>
            <button aria-label="关闭目录"><CrossX size={13} sw={1} /></button>
          </PanelHead>
          <PanelTools>
            {["M5 7l4 4 4-4", "M5 11l4-4 4 4", "M9 5.500v7M5.500 9h7", "M5.500 9h7"].map((d, i) => (
              <button key={d} aria-label={["展开", "收起", "增加", "减少"][i]}>
                <Icon w={18} h={18} c={i < 2 ? "#7d8088" : "#c2c4c8"}>
                  <rect x="1" y="1" width="16" height="16" rx="1.500" />
                  <path d={d} />
                </Icon>
              </button>
            ))}
            <SmartBtn>
              <Icon w={18} h={16}>
                <ellipse cx="9" cy="8" rx="9" ry="8" fill="#4d98f3" stroke="none" />
                <path d="M3 8.500l2-1.500M13 7l2 1.500" stroke="#fff" strokeWidth="2" strokeLinecap="round" />
              </Icon>
              智能识别目录
            </SmartBtn>
          </PanelTools>
          <Outline />
        </Panel>

        <DocArea>
          <Page>
            <TableWrap>
              <Grid>
                <colgroup>
                  {columns.map((w, i) => (
                    <col key={i} style={{ width: w }} />
                  ))}
                </colgroup>
                <tbody>
                  <Row $h={89}>
                    <Cell rowSpan={2}><ParaMark /></Cell>
                    <Cell><ParaMark /></Cell>
                    <Cell colSpan={2}><ParaMark /></Cell>
                    <Cell><ParaMark /></Cell>
                    <Cell><ParaMark /><RowEnd><RowEndMark /></RowEnd></Cell>
                  </Row>
                  <Row $h={89}>
                    <Cell><ParaMark /></Cell>
                    <Cell><ParaMark /></Cell>
                    <Cell colSpan={2}><ParaMark /></Cell>
                    <Cell><ParaMark /><RowEnd><RowEndMark /></RowEnd></Cell>
                  </Row>
                  {[3, 4].map((n) => (
                    <Row $h={89} key={n}>
                      <Cell><ParaMark /></Cell>
                      <Cell><ParaMark /></Cell>
                      <Cell colSpan={2}><ParaMark /></Cell>
                      <Cell><ParaMark /></Cell>
                      <Cell><ParaMark /><RowEnd><RowEndMark /></RowEnd></Cell>
                    </Row>
                  ))}
                  <Row $h={268}>
                    <Cell colSpan={6} $selected><ParaMark /><RowEnd><RowEndMark /></RowEnd></Cell>
                  </Row>
                </tbody>
              </Grid>
              <Corner $side="left" />
              <Corner $side="right" />
              <MoveHandle aria-label="移动表格">
                <Icon c="#6f6f6f" sw={1.5}>
                  <path d="M10 1.500v17M1.500 10h17M7 4l3-3 3 3M7 16l3 3 3-3M4 7l-3 3 3 3M16 7l3 3-3 3" />
                </Icon>
              </MoveHandle>
              <AddColumn aria-label="添加列"><Plus size={12} c="#6f6f6f" sw={1.4} /></AddColumn>
              <AddRow aria-label="添加行"><Plus size={12} c="#6f6f6f" sw={1.4} /></AddRow>
              <ResizeHandle aria-label="调整表格大小">
                <Icon c="#6f6f6f" sw={1.5}>
                  <path d="M2.500 8V3h5M2.500 3l5.500 6M17.500 12v5h-5M17.500 17l-5.500-6" />
                </Icon>
              </ResizeHandle>
            </TableWrap>
            <LastPara><ParaMark /></LastPara>
          </Page>
        </DocArea>

        <ScrollBar>
          <ScrollBtn $light aria-label="标尺">
            <Icon w={11} h={12}>
              <path d="M2 1h7v2L5.500 6.500 2 3zM0.500 8h2v2h2V8h2v2h2V8h2v4h-10z" fill="#b0b8cc" stroke="none" />
            </Icon>
          </ScrollBtn>
          <ScrollBtn aria-label="向上滚动">
            <Icon w={8} h={5}><path d="M0 5h8L4 0z" fill="#8391ad" stroke="none" /></Icon>
          </ScrollBtn>
          <Track><Thumb /></Track>
          <ScrollBtn aria-label="向下滚动">
            <Icon w={8} h={5}><path d="M0 0h8L4 5z" fill="#8391ad" stroke="none" /></Icon>
          </ScrollBtn>
          <ScrollBtn aria-label="上一页">
            <Icon w={8} h={10}><path d="M0.500 4.500h7L4 0zM0.500 9.500h7L4 5z" fill="#8391ad" stroke="none" /></Icon>
          </ScrollBtn>
          <ScrollBtn aria-label="选择浏览对象">
            <Icon w={8} h={8} c="#8391ad"><rect x="1" y="1" width="6" height="6" rx="1" /></Icon>
          </ScrollBtn>
          <ScrollBtn aria-label="下一页">
            <Icon w={8} h={10}><path d="M0.500 0.500h7L4 5zM0.500 5.500h7L4 10z" fill="#8391ad" stroke="none" /></Icon>
          </ScrollBtn>
        </ScrollBar>

        <RightRail>
          <Grip />
          <SideBtn aria-label="画笔">
            <Icon><path d="M1 18.500h18M1 18c0-5 2-7 4.500-7 2 0 3.500 2 2.500 4-1 2-3.500 3-7 3zM6 11 15.500 1.500l3 2.500L8.500 14" /></Icon>
          </SideBtn>
          <SideBtn aria-label="选择">
            <Icon><path d="M5 1v17l4-4.500 3 6 2.500-1.500-2.500-5.500h6.500z" /></Icon>
          </SideBtn>
          <SideBtn aria-label="属性">
            <Icon><circle cx="3.500" cy="4.500" r="2.500" /><path d="M6 4.500h14M0.500 15.500h11M17 15.500h3" /><circle cx="14.500" cy="15.500" r="2.500" /></Icon>
          </SideBtn>
          <SideBtn aria-label="帮助">
            <Icon><circle cx="10" cy="10" r="9.200" /><path d="M6.500 8c0-5 7.500-4.500 7 0-.300 2-3.500 2-3.500 5M10 14.500v2" /></Icon>
          </SideBtn>
          <SideBtn aria-label="素材">
            <Icon>
              <path d="M7 18.500H2.500V11C0.500 9 1 4 3.500 1.500h13C19 3.500 19 6 18.500 8M2.500 11c2.500 0 4-1.500 4-3.500 0 3.500 4.500 3.500 4.500 0" />
              <path d="M13 19c-3-1-4-3.500-3.500-6 2 .500 3.500 2.500 3.500 6 0-4 0-7 3-9.500 1 3.500.500 7-3 9.500 1-3 3-4.500 6-5-.500 3-2.500 5-6 5z" />
            </Icon>
          </SideBtn>
          <SideFoot>
            <button aria-label="更多工具">
              <Icon h={6}><circle cx="3" cy="3" r="2" /><circle cx="10" cy="3" r="2" /><circle cx="17" cy="3" r="2" /></Icon>
            </button>
          </SideFoot>
          <Gauge />
        </RightRail>

        <Dialog role="dialog" aria-label="拆分单元格" onSubmit={(e) => e.preventDefault()}>
          <DialogTitle>
            <WLogo size={18} />
            拆分单元格
            <button type="button" aria-label="关闭"><CrossX c="#000" /></button>
          </DialogTitle>
          <DialogBody>
            <Field>
              <label htmlFor="cols">列数(<u>C</u>):</label>
              <NumBox>
                <NumInput id="cols" type="text" defaultValue="1" />
                <Spin>
                  <button type="button" aria-label="增加列数"><Icon w={8} h={4}><path d="M0 4h8L4 0z" fill="#000" stroke="none" /></Icon></button>
                  <button type="button" aria-label="减少列数"><Icon w={8} h={4}><path d="M0 0h8L4 4z" fill="#000" stroke="none" /></Icon></button>
                </Spin>
              </NumBox>
            </Field>
            <Field>
              <label htmlFor="rows">行数(<u>R</u>):</label>
              <NumBox $focus>
                <NumInput id="rows" type="text" defaultValue="3" />
                <Cursor />
                <Spin>
                  <button type="button" aria-label="增加行数"><Icon w={8} h={4}><path d="M0 4h8L4 0z" fill="#000" stroke="none" /></Icon></button>
                  <button type="button" aria-label="减少行数"><Icon w={8} h={4}><path d="M0 0h8L4 4z" fill="#000" stroke="none" /></Icon></button>
                </Spin>
              </NumBox>
            </Field>
            <MergeCheck>
              <CheckBox type="checkbox" disabled />
              <span>拆分前合并单元格(<u>M</u>)</span>
            </MergeCheck>
            <DialogButtons>
              <DialogBtn type="submit" $primary>确定</DialogBtn>
              <DialogBtn type="button">取消</DialogBtn>
            </DialogButtons>
          </DialogBody>
        </Dialog>
      </Body>

      <StatusBar>
        <StatusItem $pad="0 7px">页码: 1</StatusItem>
        <Rule $h={18} />
        <StatusItem $pad="0 7px">页面: 1/1</StatusItem>
        <Rule $h={18} />
        <StatusItem>节: 1/1</StatusItem>
        <StatusItem>设置值: 8.8厘米</StatusItem>
        <Rule $h={18} />
        <StatusItem>行: 1</StatusItem>
        <StatusItem $pad="0 12px 0 7px">列: 2</StatusItem>
        <Rule $h={18} />
        <StatusItem $pad="0 5px 0 9px">字数: 0</StatusItem>
        <Rule $h={18} />
        <StatusItem $pad="0 8px 0 5px">
          <Icon c="#4b5670"><path d="M1 2h7l2 1.500L12 2h7v15h-7l-2 2-2-2H1zM6 9.500l3 3.500 5-6" /></Icon>
          拼写检查
          <Caret />
        </StatusItem>
        <Rule $h={18} />
        <StatusItem $pad="0 11px">
          <Icon c="#4b5670"><path d="M1 2h7l2 1.500L12 2h7v15h-7l-2 2-2-2H1zM7 7l6 6M13 7l-6 6" /></Icon>
          文档校对
        </StatusItem>
        <Rule $h={18} />
        <StatusItem $pad="0 12px">
          <Icon c="#4b5670"><path d="M1 4V1.500h12V4M7 1.500V17M4.500 17h5M13.500 10c0-3.500 5.500-3 5 0-.300 2-2.500 2-2.500 4.500M16 16v2" /></Icon>
          缺失字体
        </StatusItem>
        <StatusRight>
          <button aria-label="护眼模式">
            <Icon>
              <path d="M0.500 13c4-7 15-7 19 0-4 7-15 7-19 0zM10 0.500v3M3 2l1.500 3M17 2l-1.500 3" />
              <circle cx="10" cy="13" r="3.500" />
            </Icon>
          </button>
          <Rule $h={18} />
          <ViewButtons>
            <ViewBtn $on aria-label="页面视图">
              <Icon><path d="M1.500 1H14l4.500 4v14h-17zM5 8h10M5 12h10" /></Icon>
            </ViewBtn>
            <ViewBtn aria-label="大纲视图">
              <Icon><path d="M0.500 3h3M6 3h13M3.500 8h3M9 8h10M0.500 13h3M6 13h13M3.500 18h3M9 18h10" /></Icon>
            </ViewBtn>
            <ViewBtn aria-label="阅读版式">
              <Icon><path d="M1 1.500h7L10 3l2-1.500h7V17h-7l-2 2-2-2H1zM10 3v15" /></Icon>
            </ViewBtn>
            <ViewBtn aria-label="Web版式">
              <Icon><circle cx="10" cy="10" r="9" /><ellipse cx="10" cy="10" rx="4" ry="9" /><path d="M1 10h18M2.500 5.500h15M2.500 14.500h15" /></Icon>
            </ViewBtn>
            <ViewBtn aria-label="写作模式">
              <Icon><path d="M1.500 18.500 4 12 14.500 1l4 3.500L8 16zM4 12l4 4M12 19h8M1 19h9" /></Icon>
            </ViewBtn>
          </ViewButtons>
          <Rule $h={18} />
          <ZoomTools>
            <ZoomFit>
              <button aria-label="最佳显示比例">
                <Icon c="#4b5670"><path d="M1 5V1h4M15 1h4v4M19 15v4h-4M5 19H1v-4M5.500 5h9v10h-9z" /></Icon>
              </button>
              <CaretButton>120%<Caret /></CaretButton>
            </ZoomFit>
            <button aria-label="缩小"><Icon w={12} h={3} sw={2.6}><path d="M0 1.500h12" /></Icon></button>
            <ZoomSlider type="range" min={0} max={100} defaultValue={52} aria-label="显示比例" />
            <button aria-label="放大"><Plus sw={2.6} /></button>
            <button aria-label="全屏">
              <Icon sw={1.6}>
                <path d="M1.500 6V1.500H6M1.500 1.500l5 5M14 1.500h4.500V6M18.500 1.500l-5 5M1.500 14v4.500H6M1.500 18.500l5-5M18.500 14v4.500H14M18.500 18.500l-5-5" />
              </Icon>
            </button>
          </ZoomTools>
        </StatusRight>
      </StatusBar>
    </Shell>
  );
}
